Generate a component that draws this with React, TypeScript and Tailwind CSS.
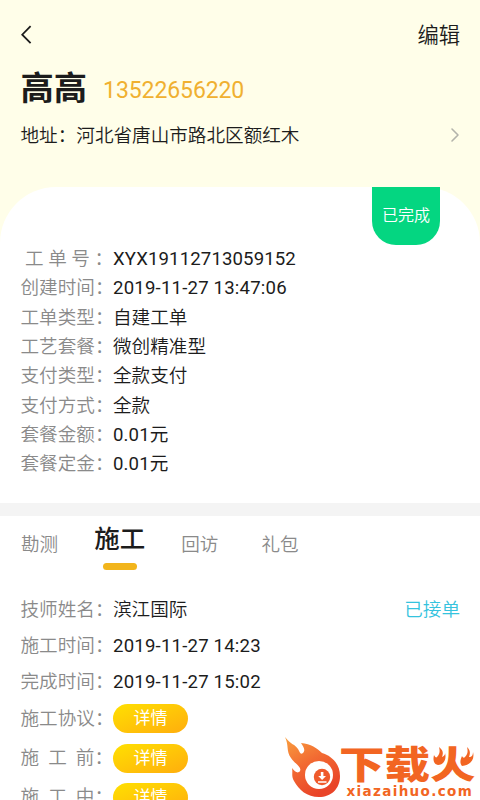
import { ChevronRight } from "lucide-react";
import { clsx } from "clsx";

type Field = {
  label: string;
  value: string;
};

const orderFields: Field[] = [
  { label: " 工 单 号 ：", value: "XYX19112713059152" },
  { label: "创建时间：", value: "2019-11-27 13:47:06" },
  { label: "工单类型：", value: "自建工单" },
  { label: "工艺套餐：", value: "微创精准型" },
  { label: "支付类型：", value: "全款支付" },
  { label: "支付方式：", value: "全款" },
  { label: "套餐金额：", value: "0.01元" },
  { label: "套餐定金：", value: "0.01元" },
];

const workFields: Field[] = [
  { label: "技师姓名：", value: "滨江国际" },
  { label: "施工时间：", value: "2019-11-27 14:23" },
  { label: "完成时间：", value: "2019-11-27 15:02" },
];

const detailLabels = ["施工协议：", "施  工  前：", "施  工  中："];

const tabs = ["勘测", "施工", "回访", "礼包"];

function Label({ children }: { children: string }) {
  return (
    <span className="w-[92.5px] shrink-0 whitespace-pre font-[350] text-[#8a8a8a]">
      {children}
    </span>
  );
}

function Value({ children }: { children: string }) {
  // latin and digit strings run slightly wider than the CJK ones
  const numeric = /^[\dA-Z]/.test(children);
  const wide = children.startsWith("20");
  return (
    <span
      className={clsx(
        numeric ? "font-normal" : "font-[350]",
        numeric && (wide ? "tracking-[0.19px]" : "tracking-[0.12px]"),
      )}
    >
      {children}
    </span>
  );
}

function Header() {
  return (
    <header className="h-[187px] bg-[#fffee9] pl-[20.5px] pr-5">
      <div className="flex h-[70px] items-center justify-between">
        <svg width="11" height="20" viewBox="0 0 11 20" fill="none" stroke="currentColor" strokeWidth="1.8">
          <path d="M9.6 1.2L1.2 9.7L9.6 18.2" />
        </svg>
        <button className="pt-0.5 text-[21.3px] font-[350] leading-none">编辑</button>
      </div>
      <div className="flex h-[38px] items-center">
        <h1 className="text-[33.3px] font-bold leading-none">高高</h1>
        <span className="ml-4 pt-[3px] text-[23px] leading-none tracking-[-0.1px] text-[#f0b030]">
          13522656220
        </span>
      </div>
      <div className="flex h-[54px] items-center justify-between text-[18.6px] font-[350]">
        <p className="pt-0.5">地址：河北省唐山市路北区额红木</p>
        <ChevronRight className="-mr-[7px] h-[24px] w-[24px] text-[#b3b3ab]" strokeWidth={1.6} />
      </div>
    </header>
  );
}

function OrderCard() {
  return (
    <section className="bg-[#fffee9]">
      <div className="h-[316px] rounded-t-[56px] bg-white pl-[20.5px] pr-10">
        <div className="flex h-[57.4px] justify-end">
          <div className="flex h-[58px] w-[68px] shrink-0 items-center justify-center rounded-b-[24px] bg-[#04d681] text-[16px] font-[350] text-white">
            已完成
          </div>
        </div>
        <dl>
          {orderFields.map((field) => (
            <div key={field.label} className="flex h-[29.33px] items-center">
              <Label>{field.label}</Label>
              <Value>{field.value}</Value>
            </div>
          ))}
        </dl>
      </div>
    </section>
  );
}

function Tabs() {
  return (
    <nav className="flex h-[76px] pl-[21px] pt-[7px]">
      {tabs.map((tab) => {
        const active = tab === "施工";
        return (
          <button
            key={tab}
            className={clsx(
              "flex flex-col items-center",
              active
                ? "mr-9 text-[25.5px] font-medium"
                : "mr-[43px] pt-[6px] text-[18.6px] font-[350] text-[#8a8a8a]",
              tab === "勘测" && "mr-[36px]!",
            )}
          >
            <span className="leading-[32px]">{tab}</span>
            {active && <span className="mt-2 h-[7px] w-[34px] rounded-full bg-[#f2b51c]" />}
          </button>
        );
      })}
    </nav>
  );
}

function WorkList() {
  return (
    <section className="pl-[20.5px] pr-5">
      {workFields.map((field, index) => (
        <div key={field.label} className="flex h-9 items-center">
          <Label>{field.label}</Label>
          <Value>{field.value}</Value>
          {index === 0 && <span className="ml-auto font-[350] text-[#35c3de]">已接单</span>}
        </div>
      ))}
      <div className="-mt-px">
        {detailLabels.map((label) => (
          <div key={label} className="flex h-[39.4px] items-center">
            <Label>{label}</Label>
            <button className="h-[29px] w-[75px] rounded-full bg-linear-to-br from-[#ffe000] to-[#ffad0d] text-[17px] leading-[29px] text-white">
              详情
            </button>
          </div>
        ))}
      </div>
    </section>
  );
}

function Watermark() {
  return (
    <div className="absolute left-[284px] top-[736px] h-16 w-[196px] text-[#f26522]">
      <span className="absolute left-[55px] top-[11px] origin-top scale-y-[0.83] whitespace-nowrap text-[45.5px] font-black leading-[44px]">
        下载火
      </span>
      <svg className="absolute left-0 top-0" width="196" height="64" viewBox="0 0 196 64">
        <defs>
          <linearGradient id="flame" x1="0" y1="0" x2="0.5" y2="1">
            <stop offset="0" stopColor="#f9a03f" />
            <stop offset="0.5" stopColor="#f26a32" />
            <stop offset="1" stopColor="#e94428" />
          </linearGradient>
        </defs>
        <path
          d="M1 1C7 9 11 8 14 13C16 16 16 19 19 17C22 14 19 10 17 7C27 8 33 12 38 17C48 20 56 28 56 40C56 53 47 61 35 61C23 61 15 54 10 45C7 40 9 37 8 32C11 36 14 38 16 35C18 31 11 28 7 22C2 15 5 9 1 1Z"
          fill="url(#flame)"
        />
        <circle cx="35" cy="39" r="14" fill="#fff" />
        <circle cx="38" cy="41" r="8.2" fill="#ef5a2c" />
        <path d="M36.8 36H39.4V40H42L38.1 44L34.2 40H36.8ZM34 45.2H42.5V46.8H34Z" fill="#fff" />
        {/* small flames in place of the two dots of 火 */}
        <path d="M148 11H160V30H148ZM176 11H190V30H176Z" fill="#fff" />
        <path
          d="M155 11C160 15 159 18 158 21C161 20 161 18 161 17C163 24 159 29 154 29C149 28 149 23 150 19C151 21 152 22 153 21C156 18 156 15 155 11Z"
          fill="currentColor"
        />
        <path
          d="M183 11C187 15 186 18 185 21C188 21 189 19 189 16C191 24 186 29 178 30C175 26 177 23 178 20C179 22 180 22 181 21C184 18 184 15 183 11Z"
          fill="currentColor"
        />
      </svg>
      <span className="absolute left-[62.5px] top-[48px] font-['DejaVu_Sans'] text-[13.5px] font-bold leading-[14px] tracking-[1.35px]">
        xiazaihuo.com
      </span>
    </div>
  );
}

export default function App() {
  return (
    <main className="relative h-[800px] w-[480px] overflow-hidden bg-white font-[Roboto,'Noto_Sans_CJK_SC',sans-serif] text-[18.6px] leading-[28px] text-[#1c1c1c]">
      <Header />
      <OrderCard />
      <div className="h-[13px] bg-[#f4f4f4]" />
      <Tabs />
      <WorkList />
      <Watermark />
    </main>
  );
}
